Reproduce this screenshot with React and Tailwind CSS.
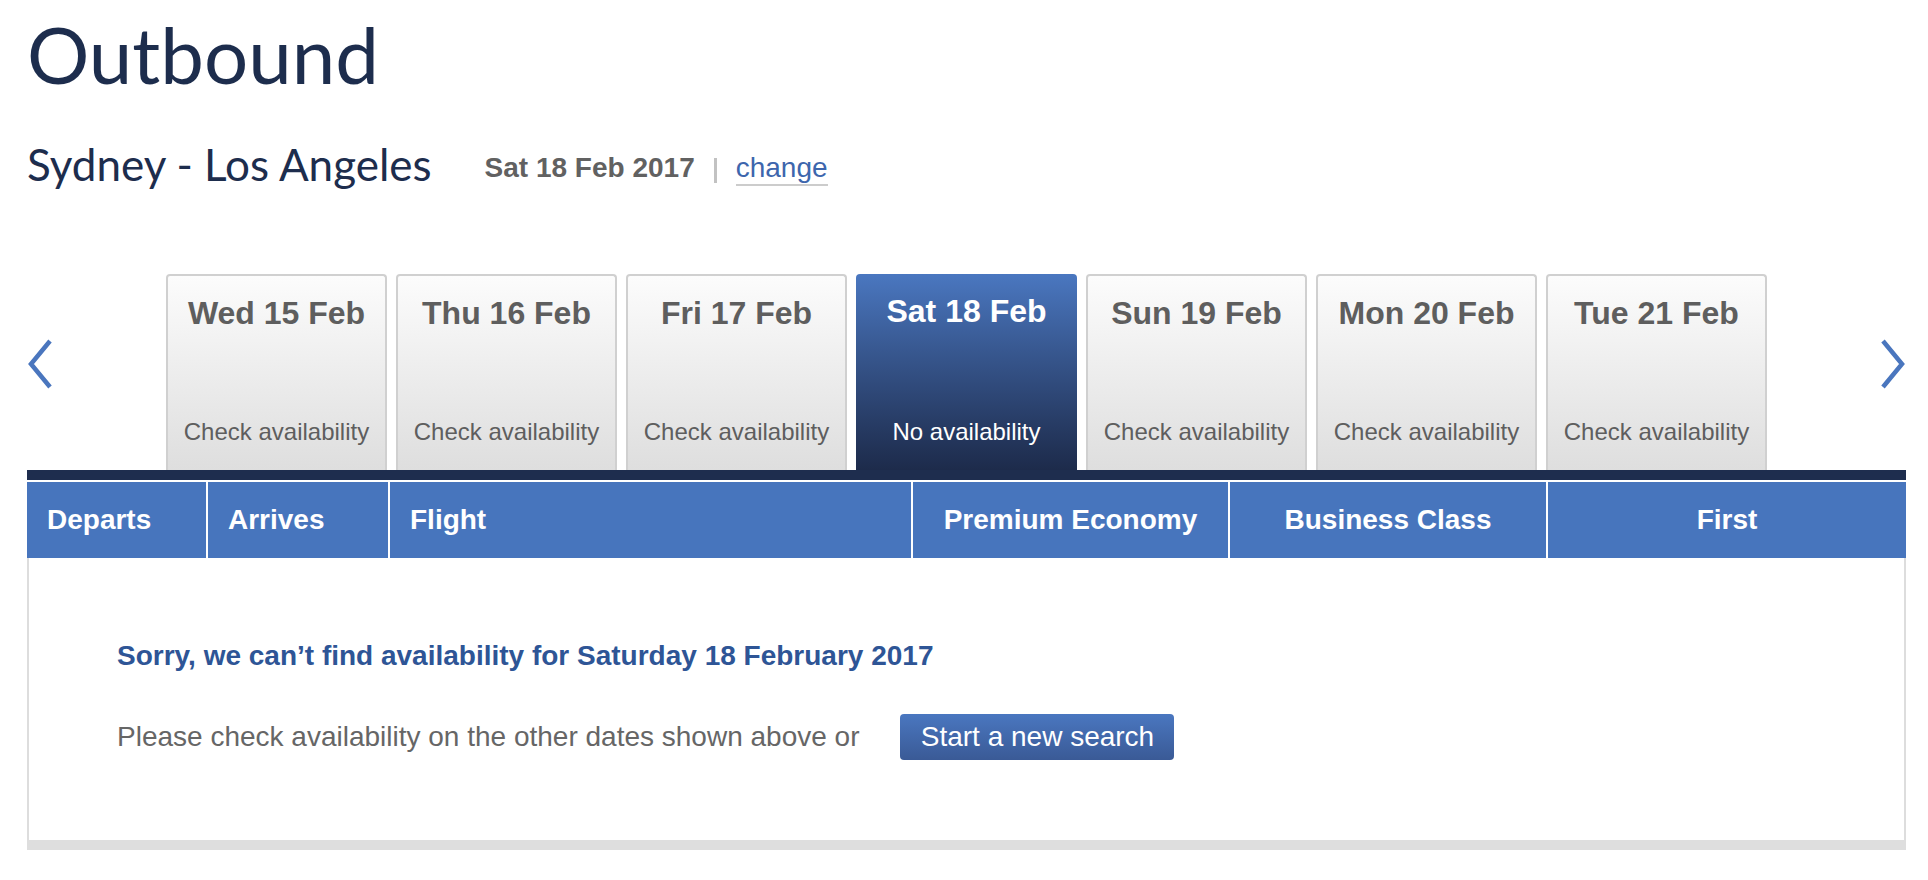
const dates = [
  { day: 'Wed 15 Feb', note: 'Check availability' },
  { day: 'Thu 16 Feb', note: 'Check availability' },
  { day: 'Fri 17 Feb', note: 'Check availability' },
  { day: 'Sat 18 Feb', note: 'No availability', active: true },
  { day: 'Sun 19 Feb', note: 'Check availability' },
  { day: 'Mon 20 Feb', note: 'Check availability' },
  { day: 'Tue 21 Feb', note: 'Check availability' },
];

function Chevron({ dir }) {
  return (
    <svg width="26" height="50" viewBox="0 0 26 50" className="mt-[65px] shrink-0">
      <polyline
        points={dir === 'left' ? '23,2 4,25 23,48' : '3,2 22,25 3,48'}
        fill="none"
        stroke="#4a76be"
        strokeWidth="4.5"
      />
    </svg>
  );
}

function DateTab({ day, note, active }) {
  if (active) {
    return (
      <div className="w-[221px] h-[196px] rounded-t-[4px] bg-gradient-to-b from-[#4a77c0] to-[#1d2b4b] flex flex-col justify-between items-center pt-[19px] pb-[24px] text-white">
        <div className="text-[32px] leading-[36px] font-bold">{day}</div>
        <div className="text-[24px] leading-[28px]">{note}</div>
      </div>
    );
  }
  return (
    <div className="w-[221px] h-[196px] rounded-t-[4px] border-2 border-b-0 border-[#d0d0d0] bg-gradient-to-b from-[#fcfcfc] to-[#dedede] flex flex-col justify-between items-center pt-[19px] pb-[24px] text-[#5e5e5e]">
      <div className="text-[32px] leading-[36px] font-bold">{day}</div>
      <div className="text-[24px] leading-[28px]">{note}</div>
    </div>
  );
}

export default function App() {
  return (
    <div className="min-h-screen bg-white pl-[27px] pr-[22px] pt-[8px] font-['Liberation_Sans',Arial,sans-serif]">
      <h1 className="font-['Lato',sans-serif] text-[78px] leading-[1.2] text-[#1d2d4d]">Outbound</h1>

      <div className="flex items-start mt-[36px]">
        <div className="font-['Lato',sans-serif] text-[44px] leading-[1.2] text-[#1d2d4d]">Sydney - Los Angeles</div>
        <div className="flex items-start mt-[14px] ml-[53px]">
          <span className="text-[28px] leading-[32px] font-bold text-[#616161]">Sat 18 Feb 2017</span>
          <span className="w-[3px] h-[25px] bg-[#c2c2c2] ml-[19px] mt-[6px]"></span>
          <a href="#" className="ml-[19px] text-[28px] leading-[32px] text-[#3d66ad] border-b-2 border-[#cccccc]">change</a>
        </div>
      </div>

      <div className="flex justify-between items-start mt-[84px]">
        <Chevron dir="left" />
        <div className="flex gap-[9px]">
          {dates.map((d) => (
            <DateTab key={d.day} {...d} />
          ))}
        </div>
        <Chevron dir="right" />
      </div>

      <div className="h-[10px] bg-[#1e2d4e]"></div>
      <div className="mt-[2px] flex h-[76px] bg-[#4775bd] text-white text-[28px] font-bold">
        <div className="w-[179px] flex items-center pl-[20px]">Departs</div>
        <div className="w-[182px] flex items-center pl-[20px] border-l-2 border-white">Arrives</div>
        <div className="w-[523px] flex items-center pl-[20px] border-l-2 border-white">Flight</div>
        <div className="w-[317px] flex items-center justify-center border-l-2 border-white">Premium Economy</div>
        <div className="w-[318px] flex items-center justify-center border-l-2 border-white">Business Class</div>
        <div className="flex-1 flex items-center justify-center border-l-2 border-white">First</div>
      </div>

      <div className="h-[282px] border-x-2 border-[#dddddd] pt-[82px] pl-[88px]">
        <p className="text-[28px] leading-[32px] font-bold text-[#2e5596]">
          Sorry, we can’t find availability for Saturday 18 February 2017
        </p>
        <div className="mt-[42px] flex items-center h-[46px]">
          <span className="text-[28px] leading-[32px] text-[#666666]">
            Please check availability on the other dates shown above or
          </span>
          <button className="ml-[41px] h-[46px] w-[274px] flex items-center justify-center rounded-[4px] bg-gradient-to-b from-[#4a77c0] to-[#3a5a96] text-white text-[28px] leading-[32px]">
            Start a new search
          </button>
        </div>
      </div>
      <div className="h-[10px] bg-[#dedede]"></div>
    </div>
  );
}
